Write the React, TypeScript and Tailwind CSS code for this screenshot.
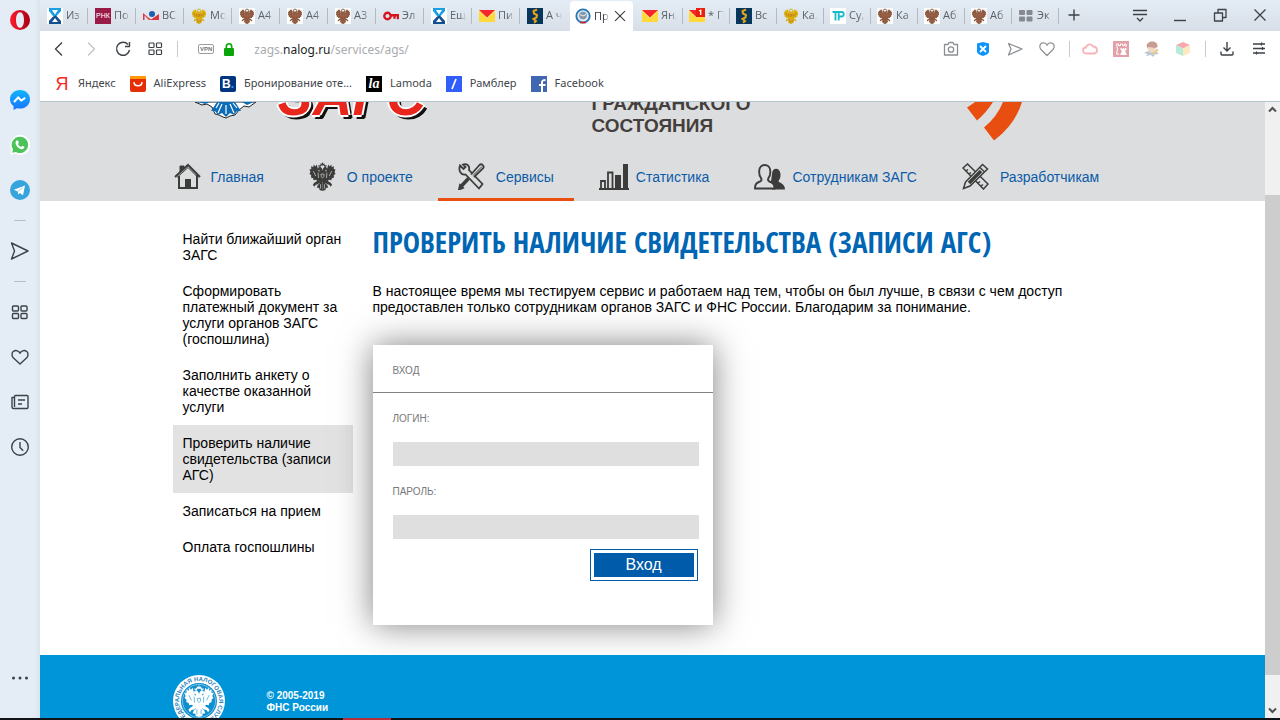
import type { ReactNode } from "react";

/* ---------- Drawings ---------- */

function Eagle({ className = "", body, accent = "#dcdddf" }: { className?: string; body: string; accent?: string }) {
  const wing = "M11.500 11L9.800 9 8 2.500 6.500 4.500 5 2.500 4.300 5.500 2.300 4.200 2.300 7.500.5 7.500 1.500 10.500.4 12 2.400 14 2 16 4.300 16.800 4.800 19 7.300 18.400 8.600 20 12 18z";
  const leg = "M11 18L5.500 21.500 4 23.500 5.500 25.500 7 23.500 9.500 23 8 26.500 10.500 27 11 29 14 30V18z";
  const head = "M14 14l-3.500-3.500L11 8.500 8.700 8 10 5.500l1.800-.5 1.700 1.700.5 2z";
  return (
    <svg viewBox="0 0 28 30" className={className} aria-hidden="true">
      <g fill={body}>
        <path d={wing} />
        <path d={leg} />
        <path d={head} />
        <path d="M10 4.800L9.600 3l1.400.5.8-1.200.7 1.500-.5 1.200z" />
        <g transform="matrix(-1 0 0 1 28 0)">
          <path d={wing} />
          <path d={leg} />
          <path d={head} />
          <path d="M10 4.800L9.600 3l1.400.5.8-1.200.7 1.500-.5 1.200z" />
        </g>
        <path d="M12.300 3.500l-.5-2 1.500.3L14 0l.7 1.800 1.500-.3-.5 2z" />
        <ellipse cx="14" cy="14.500" rx="4" ry="6" />
      </g>
      <g stroke={accent} strokeWidth=".7" fill="none">
        <path d="M9.500 11l.3 5.500M18.500 11l-.3 5.500M12 23v4.500M16 23v4.500M9 23.500l2-1.500M19 23.500l-2-1.500M4.500 9.500l2.500 5M23.500 9.500l-2.500 5" />
        <path d="M12.500 12.500h3v2.500L14 16.500 12.500 15z" />
      </g>
    </svg>
  );
}

function Fav({ kind }: { kind: string }) {
  const cls = "h-4 w-4 shrink-0";
  switch (kind) {
    case "hour":
      return (
        <svg viewBox="0 0 16 16" className={cls}>
          <path fill="#fff" d="M0 0h16v16H0z" />
          <path fill="#1aa0e0" d="M2 0h12v3L9.500 8H6L2 3z" />
          <path fill="#14508f" d="M2 16h12v-3L9 7.500 6 8.500 2 13z" />
          <path fill="#fff" d="M5 2h6L8 6.500zM5 14h6L8 10z" />
        </svg>
      );
    case "rnk":
      return (
        <span className="flex h-4 w-4 shrink-0 items-center justify-center bg-[#9b1b48] font-['Liberation_Sans'] text-[7px] leading-4 text-white">
          РНК
        </span>
      );
    case "bc":
      return (
        <svg viewBox="0 0 16 16" className={cls}>
          <path fill="#e0343c" d="M0 5l4 3.500 4 3L16 6v6H6L1.500 7.500V12H0z" />
          <circle cx="9" cy="6" r="3" fill="#1f5fb0" />
        </svg>
      );
    case "gold":
      return <Eagle className={cls} body="#d8ae10" accent="#b5352c" />;
    case "eagle":
      return (
        <span className="h-4 w-4 shrink-0 bg-white">
          <Eagle className="h-4 w-4" body="#8b5a40" accent="#cf6b54" />
        </span>
      );
    case "key":
      return (
        <svg viewBox="0 0 16 16" className={cls} fill="none" stroke="#d8141c" strokeWidth="2.400">
          <circle cx="4.500" cy="8" r="3.200" />
          <path d="M7.500 7.200H15v4M11.500 7.200v3.500" />
        </svg>
      );
    case "mail":
    case "mail1":
      return (
        <svg viewBox="0 0 16 16" className={cls}>
          <path fill="#ffd93b" d="M0 2h16v12H0z" />
          <path fill="#fff0a0" d="M0 3.500L8 11l8-7.500V2H0z" opacity=".5" />
          <path fill="#f5262c" d="M0 2h16L8 9.500z" />
          {kind === "mail1" && (
            <>
              <path fill="#e8200c" d="M7 0h9v9H7z" />
              <path stroke="#fff" strokeWidth="1.300" fill="none" d="M10 3l1.700-.8V7" />
            </>
          )}
        </svg>
      );
    case "navy":
      return (
        <svg viewBox="0 0 16 16" className={cls}>
          <path fill="#06365c" d="M0 0h16v16H0z" />
          <path fill="none" stroke="#e6a417" strokeWidth="2" d="M10 1.500L6.500 3l.5 2.500 3 1.500-.5 2.500-3 1.500L9 13l-2 1.800" />
        </svg>
      );
    case "tp":
      return (
        <svg viewBox="0 0 16 16" className={cls}>
          <path fill="#fff" d="M0 0h16v16H0z" />
          <path fill="none" stroke="#16bccb" strokeWidth="1.800" d="M2.500 4H11.500a1.800 1.800 0 010 4.500H9.500M5.500 4v8.500M8.700 4v8.500" />
        </svg>
      );
    case "grid":
      return (
        <svg viewBox="0 0 16 16" className={cls} fill="#868a90">
          <rect x="1" y="2" width="6" height="5" rx="1" />
          <rect x="8.500" y="2" width="6" height="5" rx="1" />
          <rect x="1" y="8.500" width="6" height="5" rx="1" />
          <rect x="8.500" y="8.500" width="6" height="5" rx="1" />
        </svg>
      );
    default:
      return (
        <svg viewBox="0 0 16 16" className={cls}>
          <circle cx="8" cy="8" r="6.700" fill="#dce8f3" stroke="#2878b5" strokeWidth="1.800" />
          <circle cx="8" cy="7.500" r="3.800" fill="#8496a8" />
          <path d="M5 6.500l3 1.500 3-1.500" stroke="#eef4f8" fill="none" />
          <path d="M5 14.500h6" stroke="#c32132" strokeWidth="1.600" />
        </svg>
      );
  }
}

function Line({ d, size = 20, color = "#3c4248", width = 1.4, children }: { d?: string; size?: number; color?: string; width?: number; children?: ReactNode }) {
  return (
    <svg width={size} height={size} viewBox="0 0 20 20" fill="none" stroke={color} strokeWidth={width} strokeLinejoin="round" className="shrink-0" aria-hidden="true">
      {d && <path d={d} />}
      {children}
    </svg>
  );
}

const HEART = "M10 16.500L4 10.500C2.200 8.500 2.500 5.500 4.500 4.300 6.500 3.200 9 4 10 6.200 11 4 13.500 3.200 15.500 4.300c2 1.200 2.300 4.200.5 6.200z";
const SEND = "M1.500 2L18 10 1.500 18 4.500 10z";

function Squares() {
  return (
    <>
      <rect x="2.500" y="4" width="6" height="5" rx="1" />
      <rect x="11" y="4" width="6" height="5" rx="1" />
      <rect x="2.500" y="11.500" width="6" height="5" rx="1" />
      <rect x="11" y="11.500" width="6" height="5" rx="1" />
    </>
  );
}

/* ---------- Side bar ---------- */

function SideButton({ label, children }: { label: string; children: ReactNode }) {
  return (
    <button type="button" aria-label={label} className="flex h-[45px] w-full items-center justify-center">
      {children}
    </button>
  );
}

function SideBar() {
  return (
    <aside className="flex w-10 shrink-0 flex-col items-center bg-gradient-to-r from-[#e4edf5] from-85% to-[#dbe3eb]">
      <button type="button" aria-label="Opera" className="mt-[10px] mb-[47px] h-5 w-5">
        <svg viewBox="0 0 20 20">
          <defs>
            <linearGradient id="op" x1="0" x2="1">
              <stop offset="0" stopColor="#ff1b2d" />
              <stop offset="1" stopColor="#a70014" />
            </linearGradient>
          </defs>
          <path fillRule="evenodd" fill="url(#op)" d="M10 0a10 10 0 100 20 10 10 0 000-20zm0 2.200c2.500 0 4 3.300 4 7.800s-1.500 7.800-4 7.800S6 14.500 6 10s1.500-7.800 4-7.800z" />
        </svg>
      </button>
      <SideButton label="Messenger">
        <svg width="20" height="20" viewBox="0 0 20 20">
          <defs>
            <linearGradient id="ms" y1="0" y2="1" x1="0" x2="0">
              <stop offset="0" stopColor="#10b5ff" />
              <stop offset="1" stopColor="#1a73ff" />
            </linearGradient>
          </defs>
          <path fill="url(#ms)" d="M10 0C4.300 0 0 4 0 9.200c0 3 1.400 5.300 3.600 7V20l3.300-1.800c1 .2 2 .4 3.100.4 5.700 0 10-4.200 10-9.400S15.700 0 10 0z" />
          <path d="M4 12l4.200-4.500 3 3 4-2.700" fill="none" stroke="#fff" strokeWidth="2" />
        </svg>
      </SideButton>
      <SideButton label="WhatsApp">
        <svg width="20" height="20" viewBox="0 0 20 20">
          <path fill="#fff" d="M10 0a10 10 0 00-8.500 15L0 20l5.200-1.400A10 10 0 1010 0z" />
          <path fill="#4cc35a" d="M10 1.700a8.200 8.200 0 00-7 12.700l-.8 3.400 3.600-.8A8.200 8.200 0 1010 1.700z" />
          <path fill="#fff" d="M6.500 5.500l1.500 0 .9 2.300-1 1.200c.7 1.400 1.700 2.300 3.100 3l1.200-1.300 2.200 1.100c0 1.600-1.200 2.500-2.500 2.400C8.500 13.800 5.800 10.500 5.500 8c0-1.100.4-1.900 1-2.500z" />
        </svg>
      </SideButton>
      <SideButton label="Telegram">
        <svg width="20" height="20" viewBox="0 0 20 20">
          <circle cx="10" cy="10" r="10" fill="#37a5dd" />
          <path fill="#fff" d="M3.800 9.800L15 5.400l-2 9.800-3.200-2.300-1.700 1.600-.3-3z" />
          <path stroke="#a9cfe6" d="M8 11.400l5-4" />
        </svg>
      </SideButton>
      <hr className="mt-2 w-3 border-[#b3bfca]" />
      <div className="flex h-[60px] items-center">
        <button type="button" aria-label="Flow">
          <Line d={SEND} />
        </button>
      </div>
      <hr className="mb-[7px] w-3 border-[#b3bfca]" />
      <SideButton label="Экспресс-панель">
        <Line><Squares /></Line>
      </SideButton>
      <SideButton label="Закладки">
        <Line d="M10 17L3.500 11C1.500 9 1.500 5.800 3.500 4.300c2.300-1.500 5.500-.5 6.500 2 1-2.500 4.200-3.500 6.500-2 2 1.500 2 4.700 0 6.700z" />
      </SideButton>
      <SideButton label="Новости">
        <Line d="M4.500 5.500H2v9.500a1.500 1.500 0 001.500 1.500H17a1 1 0 001-1V4.500a1 1 0 00-1-1H5.500a1 1 0 00-1 1V15M8 8h7M8 12h4" />
      </SideButton>
      <SideButton label="История">
        <Line d="M10 5v5.500l3.200 3.200"><circle cx="10" cy="10" r="8.300" /></Line>
      </SideButton>
      <button type="button" aria-label="Ещё" className="mt-auto mb-[30px] h-5 w-5">
        <svg viewBox="0 0 20 20" fill="#3c4248">
          <circle cx="3.500" cy="10" r="1.500" />
          <circle cx="10" cy="10" r="1.500" />
          <circle cx="16.500" cy="10" r="1.500" />
        </svg>
      </button>
    </aside>
  );
}

/* ---------- Tabs ---------- */

const leftTabs: [string, string][] = [
  ["hour", "Из"], ["rnk", "По"], ["bc", "ВС"], ["gold", "Мо"], ["eagle", "А4"], ["eagle", "А4"],
  ["eagle", "А3"], ["key", "Эл"], ["hour", "Ещ"], ["mail", "Пи"], ["navy", "А ч"],
];
const rightTabs: [string, string][] = [
  ["mail", "Ян,"], ["mail1", "* П"], ["navy", "Вс"], ["gold", "Ка."], ["tp", "Су,"], ["eagle", "Ка"],
  ["eagle", "Аб"], ["eagle", "Аб"], ["grid", "Эк"],
];

function Tab({ icon, text, wide, last }: { icon: string; text: string; wide?: boolean; last?: boolean }) {
  return (
    <button type="button" className={`flex h-4 items-center gap-[3px] overflow-hidden ${wide ? "w-12 pl-[7px]" : "w-[47px] pl-[6px]"} ${last ? "" : "border-r border-[#b4bac2]"}`}>
      <Fav kind={icon} />
      <span className="w-4 overflow-hidden text-left text-[11px] whitespace-nowrap text-[#5c6167] [mask-image:linear-gradient(90deg,#000_60%,transparent)]">{text}</span>
    </button>
  );
}

function TabBar() {
  return (
    <div className="flex h-[31px] items-center bg-gradient-to-b from-[#e4edf5] to-[#d8dee7]">
      {leftTabs.map(([icon, text], i) => (
        <Tab key={i} icon={icon} text={text} wide last={i === 10} />
      ))}
      <div className="mr-[3px] ml-[2px] flex h-[30px] w-[63px] shrink-0 items-center gap-[3px] self-end rounded-t bg-white pl-[5px] text-[11px] text-[#33383d]">
        <Fav kind="fns" />
        <span className="w-4 overflow-hidden [mask-image:linear-gradient(90deg,#000_60%,transparent)]">Пр</span>
        <button type="button" aria-label="Закрыть вкладку">
          <Line size={14} d="M3 3l14 14M17 3L3 17" width={1.7} />
        </button>
      </div>
      {rightTabs.map(([icon, text], i) => (
        <Tab key={i} icon={icon} text={text} />
      ))}
      <button type="button" aria-label="Новая вкладка" className="-mt-px ml-[5px]">
        <Line d="M4.500 10h11M10 4.500v11" />
      </button>
      <div className="-mt-px ml-auto flex items-center gap-5 pr-[10px]">
        <button type="button" aria-label="Меню вкладок"><Line d="M3 5.500h14M3 9.500h14M7 13l3 3 3-3" /></button>
        <button type="button" aria-label="Свернуть"><Line d="M4 15.500h12" /></button>
        <button type="button" aria-label="Восстановить"><Line d="M4.500 8h8v8h-8zM8 8V4.500h8v8h-3.500" width={1.3} /></button>
        <button type="button" aria-label="Закрыть"><Line d="M4.500 4.500l11 11M15.500 4.500l-11 11" width={1.3} /></button>
      </div>
    </div>
  );
}

/* ---------- Address row ---------- */

function AddressRow() {
  return (
    <div className="flex h-9 items-center pr-[11px] pl-[9px]">
      <button type="button" aria-label="Назад"><Line d="M13 3.500L6.500 10l6.500 6.500" /></button>
      <button type="button" aria-label="Вперёд" className="ml-3"><Line d="M7 3.500l6.500 6.500L7 16.500" color="#c3c6c9" /></button>
      <button type="button" aria-label="Обновить" className="ml-3"><Line d="M15 5.500A6.500 6.500 0 1016.500 11M16.500 3v4.500H12" /></button>
      <button type="button" aria-label="Экспресс-панель" className="mr-[12px] ml-3">
        <Line width={1.2}>
          <rect x="4" y="4" width="5" height="4.500" rx=".8" />
          <rect x="11.500" y="4" width="5" height="4.500" rx=".8" />
          <rect x="4" y="11" width="5" height="4.500" rx=".8" />
          <rect x="11.500" y="11" width="5" height="4.500" rx=".8" />
        </Line>
      </button>
      <span className="h-4 w-px bg-[#c8cbce]" />
      <span className="ml-5 rounded-[2px] border border-[#9a9ea2] px-px font-['Liberation_Sans'] text-[6px] leading-[8px] font-bold text-[#777]">VPN</span>
      <svg width="10" height="13" viewBox="0 0 10 13" className="ml-[10px]">
        <path fill="none" stroke="#09a509" strokeWidth="1.600" d="M2.300 6V3.500a2.700 2.700 0 015.400 0V6" />
        <rect y="5" width="10" height="8" rx="1" fill="#09a509" />
      </svg>
      <div className="ml-5 flex-1 pt-[2px] font-['Noto_Sans','Open_Sans',sans-serif] text-[12px] text-[#a9acaf]">
        zags.<span className="text-[#1c1f22]">nalog.ru</span>/services/ags/
      </div>
      <div className="flex items-center gap-3">
        <button type="button" aria-label="Снимок">
          <Line color="#8b8f93" width={1.3} d="M3.500 5.500H7L8 3.500h4l1 2h3.500v10.500h-13z"><circle cx="10" cy="10.500" r="2.700" /></Line>
        </button>
        <button type="button" aria-label="Блокировка рекламы">
          <svg width="20" height="20" viewBox="0 0 20 20">
            <path fill="#0a94fb" d="M4 4.500L10 3l6 1.500v8c0 2-3 3.500-6 4.500-3-1-6-2.500-6-4.500z" />
            <path stroke="#fff" strokeWidth="1.800" d="M7 7l6 6M13 7l-6 6" />
          </svg>
        </button>
        <button type="button" aria-label="Отправить"><Line color="#8b8f93" width={1.3} d="M3.500 4.500L17 10 3.500 16 6 10z" /></button>
        <button type="button" aria-label="В избранное"><Line color="#8b8f93" width={1.2} d={HEART} /></button>
      </div>
      <span className="ml-[12px] h-4 w-px bg-[#c8cbce]" />
      <div className="ml-3 flex items-center gap-[15px]">
        <svg width="16" height="16" viewBox="0 0 16 16"><path fill="none" stroke="#f6b3ba" strokeWidth="1.800" d="M4 12.500a3 3 0 010-6C5 3 9.500 2 11 5.500c5 0 5.500 7 1 7z" /></svg>
        <svg width="16" height="16" viewBox="0 0 16 16">
          <path fill="#e2a1a8" d="M0 0h16v16H0z" />
          <path fill="none" stroke="#fff" d="M6 13H3.500l1-5-1-5h2v1.500h2V3h2v1.500h2V3h1.500v3" />
          <path fill="#fff" d="M7.500 14v-1.500l1-1V9h-1V7h1.200v1h1V7h1.600v1h1V7h1.200v2h-1v2.500l1 1V14z" />
        </svg>
        <svg width="16" height="16" viewBox="0 0 16 16">
          <path fill="#bcc9d6" d="M0 12l4-2 8 0 3 3-4 .5-2 2.500-2-2-5 1 1.500-2z" />
          <circle cx="8" cy="7" r="4.500" fill="#f0dac6" />
          <path fill="#c99c92" d="M2.500 5C3 1.500 6 0 8.500.5 12 .5 14 3 13.500 6L11 7 4.500 6 3.500 7z" />
          <path stroke="#e8cf81" strokeWidth="2" d="M9 13l5-4.500" />
        </svg>
        <svg width="16" height="16" viewBox="0 0 16 16">
          <path fill="#f6a9b0" d="M8 1l7 3-7 3.500L1 4z" />
          <path fill="#b9ebd9" d="M1 4l7 3.500V15l-7-3z" />
          <path fill="#fdebc0" d="M15 4L8 7.500V15l7-3z" />
        </svg>
      </div>
      <span className="ml-[14px] h-4 w-px bg-[#c8cbce]" />
      <button type="button" aria-label="Загрузки" className="ml-[11px]"><Line d="M10 3v9M6.500 8.500L10 12l3.500-3.500M4 12.500v2.500a1 1 0 001 1h10a1 1 0 001-1v-2.500" /></button>
      <button type="button" aria-label="Настройка" className="ml-[12px]"><Line d="M4 5h12M4 9.500h12M4 14h12M12.500 3.500v3M13.500 8v3M7.500 12.500v3" width={1.3} /></button>
    </div>
  );
}

/* ---------- Bookmarks ---------- */

function Bookmark({ children, text }: { children: ReactNode; text: string }) {
  return (
    <a href="#" className="flex items-center gap-2 text-[11px] whitespace-nowrap text-[#3f454a]">
      {children}
      <span>{text}</span>
    </a>
  );
}

function Bookmarks() {
  return (
    <nav aria-label="Закладки" className="flex h-[35px] items-center gap-[14px] border-b border-[#b4c5d0] pb-px pl-[14px] font-['Noto_Sans','Open_Sans',sans-serif]">
      <Bookmark text="Яндекс"><span className="flex h-4 w-4 items-center justify-center font-['Liberation_Sans_Narrow','Liberation_Sans'] text-lg leading-4 text-[#fb2a1c]">Я</span></Bookmark>
      <Bookmark text="AliExpress">
        <svg width="16" height="16" viewBox="0 0 16 16"><rect width="16" height="16" rx="2" fill="#e62e04" /><path fill="#ff9a00" d="M0 2a2 2 0 012-2h12a2 2 0 012 2v1H0z" /><path d="M4 6c0 5 8 5 8 0" stroke="#fff" strokeWidth="1.500" fill="none" /></svg>
      </Bookmark>
      <Bookmark text="Бронирование оте..."><span className="flex h-4 w-4 items-center justify-center rounded-[2px] bg-[#003580] font-['Liberation_Sans'] text-xs leading-4 font-bold text-white">B<span className="text-[#1ba7f5]">.</span></span></Bookmark>
      <Bookmark text="Lamoda"><span className="flex h-4 w-4 items-center justify-center bg-black font-['Liberation_Serif'] text-sm leading-4 font-bold text-white italic">la</span></Bookmark>
      <Bookmark text="Рамблер">
        <svg width="16" height="16" viewBox="0 0 16 16"><path fill="#315efb" d="M0 0h16v16H0z" /><path stroke="#fff" strokeWidth="1.700" d="M6 13l4-10" /></svg>
      </Bookmark>
      <Bookmark text="Facebook">
        <svg width="16" height="16" viewBox="0 0 16 16"><path fill="#4267b2" d="M0 0h16v16H0z" /><path fill="none" stroke="#fff" strokeWidth="2" d="M11 16V6.500c0-1.800.5-2.500 3.500-2.500M8 9h6.500" /></svg>
      </Bookmark>
    </nav>
  );
}

/* ---------- Site ---------- */

const D = "#3c3c3b";
const navIcons: Record<string, ReactNode> = {
  home: (
    <svg width="27" height="27" viewBox="0 0 27 27" fill="none" stroke={D} strokeWidth="2">
      <path d="M1 14L14 2l12 12M5 13v12h18V12" />
      <path d="M3 14.500L14 4.500l10 10" strokeWidth="1" />
      <path d="M6 3h4v3L6 9z" fill={D} strokeWidth="1" />
      <path d="M11 16h6v9h-6z" fill={D} stroke="none" />
    </svg>
  ),
  eagle: <Eagle className="h-[29px] w-[27px]" body={D} />,
  tools: (
    <svg width="27" height="27" viewBox="0 0 27 27" fill="none" stroke={D} strokeWidth="1.800">
      <path d="M2 2.500L5.500 6 7.500 4 5 1.500c4-1.500 7 1.500 6 5.500l13.500 14-3.500 4.500L7.500 11.500C3.500 12.500 0 8 2 2.500z" />
      <path d="M13 11.500l8.500-9.500c2-2 5.500 1 3.500 3.500L16 14" fill="#dcdddf" />
      <path d="M24 3.500l-9 9" strokeWidth="1" />
      <path d="M10.500 15.500L3 23.500" strokeWidth="3.500" />
      <path d="M2 22l3 3-4 1.500z" fill={D} />
    </svg>
  ),
  chart: (
    <svg width="30" height="26" viewBox="0 0 30 26" fill="none" stroke={D} strokeWidth="1.800">
      <path d="M0 25h30M2 25v-8h4v8M9 25V8.500h4.500V25" />
      <path fill={D} stroke="none" d="M16 11h6v14h-6zM24 0h5v25h-5z" />
    </svg>
  ),
  people: (
    <svg width="31" height="27" viewBox="0 0 31 27">
      <path fill={D} d="M18 11c0-7 8-7 8.500 0 .3 3-.7 5-2 7 0 2 6.500 2 6.500 8.500H18l-1-8z" />
      <path fill="#dcdddf" stroke={D} strokeWidth="1.900" d="M1 25.500c-.2-4 1-5.500 4-6.500 2.500-.8 3-2 2-4-1.500-2-2-4-1.800-7C5.500 0 16 0 16.300 8c.2 3-.3 5-1.800 7-1 2-.5 3.200 2 4 3 1 4.200 2.500 4 6.500z" />
    </svg>
  ),
  pens: (
    <svg width="27" height="27" viewBox="0 0 27 27" fill="none" stroke={D} strokeWidth="1.500">
      <path d="M1 5l4.500-4L26 21l-4.500 5z" />
      <path d="M4 8l2-1.500M7 11l2-1.500M16 20l2-1.500M19 23l2-1.500" />
      <path d="M3.500 19L20.500 1.500l5 4.500L8 23l-6.500 2.500z" fill="#dcdddf" />
      <path d="M7 20L19 8" strokeWidth="3.500" />
      <path d="M18 4.500l4 4" />
    </svg>
  ),
};

const nav = [
  { icon: "home", text: "Главная" },
  { icon: "eagle", text: "О проекте" },
  { icon: "tools", text: "Сервисы", active: true },
  { icon: "chart", text: "Статистика", tight: true },
  { icon: "people", text: "Сотрудникам ЗАГС", tight: true },
  { icon: "pens", text: "Разработчикам" },
];

const menu = [
  "Найти ближайший орган ЗАГС",
  "Сформировать платежный документ за услуги органов ЗАГС (госпошлина)",
  "Заполнить анкету о качестве оказанной услуги",
  "Проверить наличие свидетельства (записи АГС)",
  "Записаться на прием",
  "Оплата госпошлины",
];

function SiteHeader() {
  return (
    <header className="bg-[#dcdddf]">
      <div className="mx-auto max-w-[960px]">
        <div className="grid h-[51px] grid-cols-[105px_313px_374px_1fr] overflow-hidden">
          <svg width="62" height="17" viewBox="0 0 62 17" className="ml-[22px]">
            <path fill="#fff" stroke="#222" strokeWidth="1" d="M0 0l7 3 5-1 5 3 3 7 4 1 4 2 3 1 4-2 5-1 4-5 5-4 5 1 7-5z" />
            <path fill="#0b6cb8" d="M3 0l7 2 5-2zM59 0l-7 3-5-3zM22 0h18l6 9-4 0-3 4-4-2-4 4-4-4-4 2-3-4h-4z" />
            <path stroke="#fff" strokeWidth="1.200" d="M27 2l-4 9M31 3v9M35 2l4 9M24 1l-3 5M38 1l4 5" />
          </svg>
          <div className="-mt-[38px] font-['Liberation_Sans'] text-[55px] leading-[64px] font-bold text-[#e8261c] italic [text-shadow:-2px_0_#fff,2px_0_#fff,0_-2px_#fff,0_2px_#fff,4px_3px_#111,3px_4px_#111]">
            ЗАГС
          </div>
          <div className="-mt-[9px] pl-px text-[19px] leading-[22px] font-bold text-[#443f3c]">
            ГРАЖДАНСКОГО
            <br />
            СОСТОЯНИЯ
          </div>
          <svg width="60" height="39" viewBox="0 0 60 39" fill="#e84e0f">
            <path d="M2 5.500L12 18.500Q21 11 28 0H10Q6 3 2 5.500zM19 25.500L29 38.500Q50 23 57 0H38Q32 15 19 25.500z" />
          </svg>
        </div>
        <nav aria-label="Разделы" className="flex h-12 gap-[5px]">
          {nav.map((n, i) => (
            <a
              key={n.text}
              href="#"
              className={`flex items-center border-b-[3px] pt-[2px] whitespace-nowrap text-[#0b5ba8] ${i === 0 ? "pr-5 pl-px" : "px-5"} ${n.tight ? "gap-[7px]" : i === 0 ? "gap-[10px]" : "gap-[11px]"} ${n.active ? "border-[#e84e0f]" : "border-transparent"}`}
            >
              {navIcons[n.icon]}
              {n.text}
            </a>
          ))}
        </nav>
      </div>
    </header>
  );
}

function LoginCard() {
  return (
    <form className="w-[340px] bg-white pb-11 text-[10px] leading-3 text-[#77787b] shadow-[0_0_32px_rgba(0,0,0,0.5)]" onSubmit={(e) => e.preventDefault()}>
      <h2 className="border-b border-[#808080] px-5 pt-5 pb-[15px]">ВХОД</h2>
      <div className="flex flex-col pt-5 pr-[14px] pl-5">
        <label htmlFor="login">ЛОГИН:</label>
        <input id="login" type="text" className="mt-[17px] h-6 bg-[#dfdfdf] px-2 text-sm text-black" />
        <label htmlFor="password" className="mt-5">ПАРОЛЬ:</label>
        <input id="password" type="password" className="mt-[17px] h-6 bg-[#dfdfdf] px-2 text-sm text-black" />
        <button type="submit" className="mt-[10px] mr-px w-[108px] self-end border border-[#005baa] p-[3px]">
          <span className="block bg-[#005baa] text-base leading-6 text-white">Вход</span>
        </button>
      </div>
    </form>
  );
}

function Emblem() {
  return (
    <svg width="52" height="52" viewBox="0 0 52 52" className="shrink-0">
      <defs>
        <path id="ring" d="M26 46A20 20 0 0 1 26 6A20 20 0 0 1 26 46" />
      </defs>
      <circle cx="26" cy="26" r="26" fill="#fff" />
      <circle cx="26" cy="26" r="18" fill="#0d8fd0" />
      <circle cx="26" cy="26" r="16.500" fill="none" stroke="#bfe2f4" strokeWidth=".6" />
      <text fontSize="6" fontWeight="700" fill="#2c83bb" fontFamily="Liberation Sans, sans-serif">
        <textPath href="#ring" startOffset="9">ФЕДЕРАЛЬНАЯ НАЛОГОВАЯ СЛУЖБА</textPath>
      </text>
      <g transform="translate(11 10)">
        <svg width="30" height="32"><Eagle body="#fff" accent="#3aa2d8" /></svg>
      </g>
    </svg>
  );
}

function Site() {
  return (
    <div className="flex min-w-0 flex-1 flex-col overflow-hidden bg-white font-['Liberation_Sans',Arial,sans-serif] text-sm leading-4 text-black">
      <SiteHeader />
      <main className="mx-auto flex w-full max-w-[960px] gap-5 pt-5 pb-[30px]">
        <ul className="w-[180px] shrink-0">
          {menu.map((m, i) => (
            <li key={m}>
              <a href="#" className={`block p-[10px] ${i === 3 ? "bg-[#e2e2e2]" : ""}`}>{m}</a>
            </li>
          ))}
        </ul>
        <div className="min-w-0 flex-1">
          <h1 className="mb-5 font-['Open_Sans_Condensed','Roboto_Condensed','Liberation_Sans_Narrow',sans-serif] text-[29px] leading-[42px] font-medium whitespace-nowrap text-[#0066b3]">
            ПРОВЕРИТЬ НАЛИЧИЕ СВИДЕТЕЛЬСТВА (ЗАПИСИ АГС)
          </h1>
          <p className="mb-[30px] max-w-[720px]">
            В настоящее время мы тестируем сервис и работаем над тем, чтобы он был лучше, в связи с чем доступ предоставлен только сотрудникам органов ЗАГС и ФНС России. Благодарим за понимание.
          </p>
          <LoginCard />
        </div>
      </main>
      <footer className="flex-1 bg-[#0095d8]">
        <div className="mx-auto flex max-w-[960px] gap-[42px] pt-5 text-[10px] leading-3 font-bold text-white">
          <Emblem />
          <p className="pt-[15px]">
            © 2005-2019
            <br />
            ФНС России
          </p>
        </div>
      </footer>
    </div>
  );
}

function ScrollBar() {
  return (
    <div aria-hidden="true" className="flex w-[15px] shrink-0 flex-col items-center bg-[#f0f0f0]">
      <svg width="15" height="15" viewBox="0 0 15 15" fill="none" stroke="#505050" strokeWidth="2"><path d="M4 9.500L7.500 6 11 9.500" /></svg>
      <div className="mt-[78px] w-full flex-1 bg-[#cdcdcd]" />
      <svg width="15" height="15" viewBox="0 0 15 15" className="mt-7" fill="none" stroke="#505050" strokeWidth="2"><path d="M4 5.500L7.500 9 11 5.500" /></svg>
    </div>
  );
}

export default function App() {
  return (
    <div className="flex h-screen flex-col overflow-hidden font-['Open_Sans','Noto_Sans',sans-serif]">
      <div className="flex min-h-0 flex-1">
        <SideBar />
        <div className="flex min-w-0 flex-1 flex-col bg-white">
          <TabBar />
          <AddressRow />
          <Bookmarks />
          <div className="flex min-h-0 flex-1">
            <Site />
            <ScrollBar />
          </div>
        </div>
      </div>
      <div className="flex h-[2px] shrink-0 bg-[#101418]">
        <span className="ml-[343px] w-12 bg-[#b5303a]" />
      </div>
    </div>
  );
}
